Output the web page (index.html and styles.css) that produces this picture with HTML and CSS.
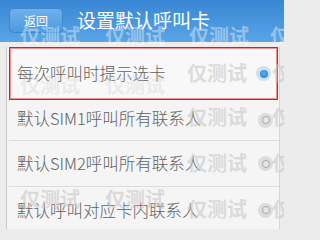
FILE: index.html
```html
<!DOCTYPE html>
<html lang="zh">
<head>
<meta charset="utf-8">
<link rel="stylesheet" href="styles.css">
</head>
<body>
<div class="screen">
  <header class="topbar">
    <div class="back">返回</div>
    <div class="title">设置默认呼叫卡</div>
  </header>
  <div class="list">
    <div class="row row-active">
      <span class="label">每次呼叫时提示选卡</span>
      <span class="radio radio-on"><span class="dot"></span></span>
    </div>
    <div class="row row-2">
      <span class="label">默认SIM1呼叫所有联系人</span>
      <span class="radio"><span class="dot"></span></span>
    </div>
    <div class="row row-3">
      <span class="label">默认SIM2呼叫所有联系人</span>
      <span class="radio"><span class="dot"></span></span>
    </div>
    <div class="row row-4">
      <span class="label">默认呼叫对应卡内联系人</span>
      <span class="radio"><span class="dot"></span></span>
    </div>
  </div>
  <div class="wm wm-light" style="left:20px;top:24px">仅测试</div>
  <div class="wm wm-light" style="left:105px;top:24px">仅测试</div>
  <div class="wm wm-light" style="left:189px;top:24px">仅测试</div>
  <div class="wm wm-light" style="left:270px;top:24px">仅</div>
  <div class="wm wm-faint" style="left:20px;top:73px">仅测试</div>
  <div class="wm wm-faint" style="left:105px;top:73px">仅测试</div>
  <div class="wm wm-gray" style="left:187px;top:61px">仅测试</div>
  <div class="wm wm-gray" style="left:272px;top:61px">仅</div>
  <div class="wm wm-gray" style="left:187px;top:105px">仅测试</div>
  <div class="wm wm-gray" style="left:272px;top:105px">仅</div>
  <div class="wm wm-gray" style="left:187px;top:151px">仅测试</div>
  <div class="wm wm-gray" style="left:272px;top:151px">仅</div>
  <div class="wm wm-gray" style="left:20px;top:187px">仅测试</div>
  <div class="wm wm-gray" style="left:105px;top:187px">仅测试</div>
  <div class="wm wm-gray" style="left:187px;top:197px">仅测试</div>
  <div class="wm wm-gray" style="left:272px;top:197px">仅</div>
</div>
</body>
</html>
```
FILE: styles.css
```css
html, body {
  margin: 0;
  padding: 0;
}
body {
  width: 284px;
  height: 229px;
  overflow: hidden;
  background: #ececec;
  font-family: "Noto Sans CJK SC", "Noto Sans", sans-serif;
}
.screen {
  position: relative;
  width: 284px;
  height: 229px;
  overflow: hidden;
}
.topbar {
  height: 42px;
  background: linear-gradient(#3886d4, #5aa5e6);
  display: flex;
  align-items: center;
  padding-left: 9px;
  box-sizing: border-box;
}
.back {
  width: 54px;
  height: 25px;
  box-sizing: border-box;
  border-radius: 5px;
  background: linear-gradient(#6eb0ea, #4f9be0);
  border: 1px solid #3a87d2;
  color: #fff;
  font-size: 12px;
  display: flex;
  align-items: center;
  justify-content: center;
  margin-top: -2px;
}
.title {
  margin-left: 14px;
  color: #fff;
  font-size: 19px;
  line-height: 1;
  margin-top: -4px;
}
.list {
  margin: 5px 4px 0 6px;
  border-left: 1px solid #c8c8c8;
  border-right: 1px solid #d6d6d6;
  background: #f4f4f4;
  padding-left: 2px;
}
.row {
  display: flex;
  align-items: center;
  justify-content: space-between;
  padding: 0 6px 0 7px;
  border-bottom: 1px solid #dcdcdc;
  box-sizing: border-box;
  background: #f5f5f5;
}
.row-active {
  height: 53px;
  border: 1px solid #e3191f;
  box-shadow: inset 0 0 0 1px rgba(235, 60, 60, 0.55);
  background: #f8f8f8;
  margin-right: 1px;
}
.row-2 { height: 41px; padding-left: 8px; }
.row-3 { height: 46px; padding-left: 8px; }
.row-4 { height: 46px; padding-left: 8px; border-bottom: 0; }
.label {
  font-size: 16.5px;
  font-weight: 300;
  color: #606060;
  line-height: 1;
}
.row-2 .label { margin-top: -4px; }
.radio {
  width: 15px;
  height: 15px;
  border-radius: 50%;
  background: #dcdcdc;
  display: flex;
  align-items: center;
  justify-content: center;
}
.radio .dot {
  width: 6px;
  height: 6px;
  border-radius: 50%;
  border: 1.5px solid #a9a9a9;
  background: #e6e6e6;
}
.radio-on {
  background: #cfdfec;
}
.radio-on .dot {
  width: 8px;
  height: 8px;
  border: 0;
  background: radial-gradient(circle at 50% 40%, #4fb0f4, #1a7fd6);
}
.wm {
  position: absolute;
  font-size: 20px;
  font-weight: bold;
  line-height: 24px;
  white-space: nowrap;
  pointer-events: none;
}
.wm-light { color: rgba(255, 255, 255, 0.4); }
.wm-gray { color: rgba(200, 200, 200, 0.6); }
.wm-faint { color: rgba(200, 200, 200, 0.3); }
```
